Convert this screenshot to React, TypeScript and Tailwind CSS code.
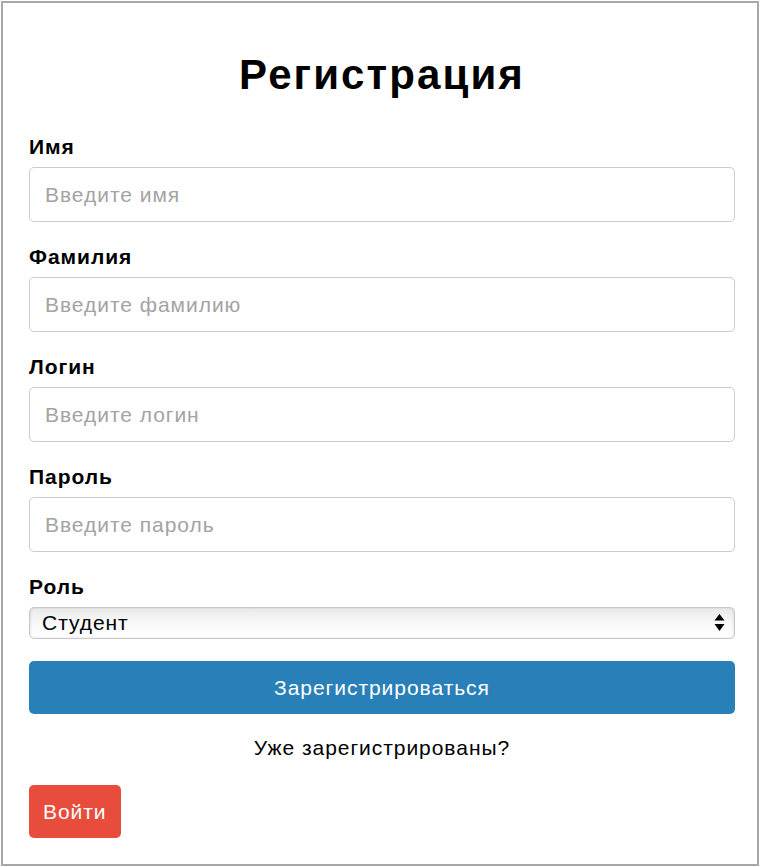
import React, { useState } from "react";

const fields = [
  { name: "firstName", label: "Имя", placeholder: "Введите имя", type: "text" },
  { name: "lastName", label: "Фамилия", placeholder: "Введите фамилию", type: "text" },
  { name: "login", label: "Логин", placeholder: "Введите логин", type: "text" },
  { name: "password", label: "Пароль", placeholder: "Введите пароль", type: "password" },
];

export default function App() {
  const [values, setValues] = useState<Record<string, string>>({});
  const [role, setRole] = useState("student");

  const handleChange = (field: string, value: string) => {
    setValues({ ...values, [field]: value });
  };

  return (
    <div className="m-[1px] w-[758px] h-[865px] border-2 border-[#a8a8a8] bg-white font-['Liberation_Sans',Arial,sans-serif] tracking-[0.06em] text-black">
      <div className="pl-[26px] pr-[22px] pt-[48px]">
        <h1 className="text-[42px] leading-[48px] font-bold text-center tracking-[0.05em] mb-[36px]">
          Регистрация
        </h1>

        {fields.map((f) => (
          <div key={f.name} className="mb-[23px]">
            <label className="block text-[21px] leading-[24px] font-bold mb-2">
              {f.label}
            </label>
            <input
              type={f.type}
              value={values[f.name] || ""}
              onChange={(e) => handleChange(f.name, e.target.value)}
              placeholder={f.placeholder}
              className="block w-full h-[55px] px-[15px] text-[21px] border border-[#cccccc] rounded-[5px] outline-none placeholder:text-[#a3a3a3]"
            />
          </div>
        ))}

        <div>
          <label className="block text-[21px] leading-[24px] font-bold mb-2">
            Роль
          </label>
          <div className="relative">
            <select
              value={role}
              onChange={(e) => setRole(e.target.value)}
              className="block w-full h-[32px] pl-[12px] pr-[30px] text-[21px] leading-[24px] appearance-none border border-[#c8c8c8] rounded-[5px] bg-[linear-gradient(to_bottom,#e9e9e9,#f7f7f7_45%,#ffffff)] shadow-[inset_1px_0_2px_rgba(0,0,0,0.08),inset_-1px_0_2px_rgba(0,0,0,0.08)] outline-none"
            >
              <option value="student">Студент</option>
              <option value="teacher">Преподаватель</option>
            </select>
            <svg
              className="absolute right-[10px] top-[6px] pointer-events-none"
              width="11"
              height="20"
              viewBox="0 0 11 20"
            >
              <path d="M5.5 1 L10.5 7.5 L0.5 7.5 Z" fill="#000" />
              <path d="M0.5 11 L10.5 11 L5.5 18 Z" fill="#000" />
            </svg>
          </div>
        </div>

        <button className="mt-[22px] block w-full h-[53px] rounded-[5px] bg-[#2980b9] text-white text-[21px]">
          Зарегистрироваться
        </button>

        <p className="mt-[22px] text-center text-[21px] leading-[24px]">
          Уже зарегистрированы?
        </p>

        <button className="mt-[25px] block h-[53px] px-[14px] rounded-[5px] bg-[#e74c3c] text-white text-[21px]">
          Войти
        </button>
      </div>
    </div>
  );
}
